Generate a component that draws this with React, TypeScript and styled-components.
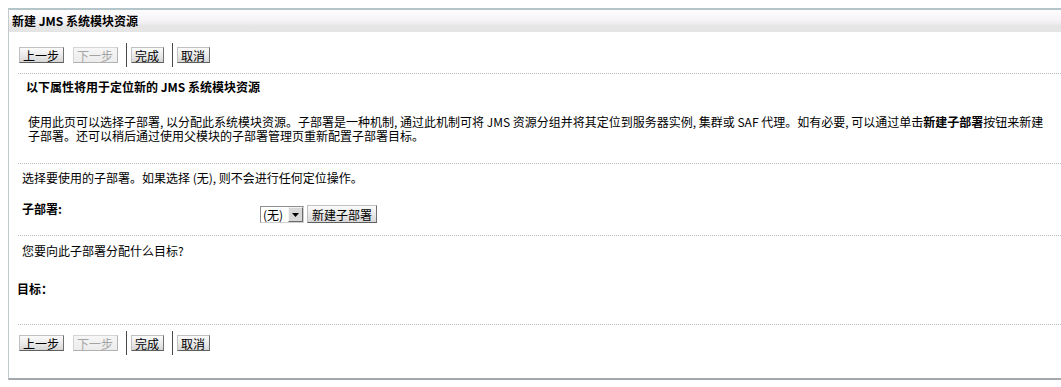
import React from "react";
import styled, { createGlobalStyle } from "styled-components";

const Global = createGlobalStyle`
  html, body { margin: 0; padding: 0; background: #fff; }
  body {
    font-family: "Noto Sans CJK SC", "DejaVu Sans", sans-serif;
    font-size: 12px;
    color: #000;
    overflow: hidden;
  }
`;

const Panel = styled.div`
  margin: 8px 0 0 8px;
  border-top: 2px solid #b4c5ca;
  border-left: 1px solid #c3cacd;
  border-bottom: 2px solid #a2a8ac;
  box-shadow: 0 1px 0 #d8dcdf;
  background: #fff;
`;

const Header = styled.div`
  height: 22px;
  display: flex;
  align-items: center;
  padding-left: 3px;
  background: linear-gradient(#fdfcfd 0%, #f6f4f7 45%, #efedf0 62%, #e6e6e6 70%, #e4e4e4 100%);
`;

const Title = styled.h1`
  margin: 0;
  font-size: 12px;
  font-weight: bold;
  line-height: 14px;
`;

const Body = styled.div`
  padding: 0 0 23px 9px;
`;

const Toolbar = styled.div<{ $top: number }>`
  display: flex;
  align-items: center;
  height: 24px;
  margin-top: ${(p) => p.$top}px;
  padding-left: 1px;
`;

const Button = styled.button<{ $gap?: number }>`
  font-family: inherit;
  font-size: 12px;
  line-height: 13px;
  height: 16px;
  padding: 0 4px 0 3px;
  margin: 0 ${(p) => p.$gap ?? 0}px 0 0;
  color: #000;
  border: 1px solid;
  border-color: #c0c0c0 #6f6f6f #5f5f5f #c0c0c0;
  background: linear-gradient(#fbfbfb, #e9e9e9 55%, #d6d6d6);
  cursor: pointer;
  &:disabled {
    color: #a4a4a4;
    border-color: #d4d4d4 #b4b4b4 #b0b0b0 #d4d4d4;
    background: linear-gradient(#f6f6f6, #ececec);
    cursor: default;
  }
`;

const Separator = styled.span<{ $gap: number }>`
  width: 1px;
  height: 24px;
  background: #4a4a4a;
  margin: 0 ${(p) => p.$gap}px 0 0;
`;

const Divider = styled.hr<{ $top: number }>`
  margin: ${(p) => p.$top}px 0 0 0;
  border: 0;
  border-top: 1px dotted #bdbdbd;
  height: 0;
`;

const Intro = styled.div`
  padding: 6px 0 20px 0;
`;

const Heading = styled.h2`
  margin: 0 0 0 8px;
  font-size: 12px;
  font-weight: bold;
  line-height: 14px;
`;

const Para = styled.p`
  margin: 21px 0 0 10px;
  font-size: 12px;
  line-height: 14px;
  white-space: nowrap;
`;

const Line = styled.div<{ $top: number; $left: number; $bold?: boolean }>`
  margin: ${(p) => p.$top}px 0 0 ${(p) => p.$left}px;
  line-height: 14px;
  font-weight: ${(p) => (p.$bold ? "bold" : "normal")};
`;

const FieldRow = styled.div`
  display: flex;
  align-items: flex-start;
  height: 19px;
  margin-top: 20px;
  padding-left: 4px;
`;

const FieldLabel = styled.label`
  width: 238px;
  flex: none;
  margin-top: -3px;
  font-weight: bold;
  line-height: 14px;
`;

const Select = styled.div`
  display: flex;
  align-items: stretch;
  justify-content: space-between;
  width: 44px;
  height: 17px;
  margin-top: 1px;
  box-sizing: border-box;
  border: 1px solid;
  border-color: #8e8e8e #d0d0d0 #d0d0d0 #8e8e8e;
  background: #fff;
  margin-right: 3px;
`;

const SelectValue = styled.span`
  padding: 0 0 0 2px;
  line-height: 15px;
  font-size: 12px;
`;

const Arrow = styled.span`
  width: 15px;
  display: flex;
  align-items: center;
  justify-content: center;
  box-sizing: border-box;
  border: 1px solid;
  border-color: #f4f4f4 #6a6a6a #6a6a6a #f4f4f4;
  background: #d8d8d8;
`;

const NewButton = styled(Button)`
  height: 18px;
  width: 70px;
  padding: 0;
`;

export default function App() {
  const nav = (
    <>
      <Button $gap={9}>上一步</Button>
      <Button $gap={8} disabled>下一步</Button>
      <Separator $gap={4} />
      <Button $gap={8}>完成</Button>
      <Separator $gap={4} />
      <Button>取消</Button>
    </>
  );
  return (
    <>
      <Global />
      <Panel>
        <Header>
          <Title>新建 JMS 系统模块资源</Title>
        </Header>
        <Body>
          <Toolbar $top={11}>{nav}</Toolbar>
          <Divider $top={6} />
          <Intro>
            <Heading>以下属性将用于定位新的 JMS 系统模块资源</Heading>
            <Para>
              使用此页可以选择子部署, 以分配此系统模块资源。子部署是一种机制, 通过此机制可将 JMS 资源分组并将其定位到服务器实例, 集群或 SAF 代理。如有必要, 可以通过单击<b>新建子部署</b>按钮来新建
              <br />
              子部署。还可以稍后通过使用父模块的子部署管理页重新配置子部署目标。
            </Para>
          </Intro>
          <Divider $top={0} />
          <Line $top={7} $left={4}>选择要使用的子部署。如果选择 (无), 则不会进行任何定位操作。</Line>
          <FieldRow>
            <FieldLabel>子部署:</FieldLabel>
            <Select>
              <SelectValue>(无)</SelectValue>
              <Arrow>
                <svg width="7" height="4" viewBox="0 0 7 4">
                  <path d="M0 0h7L3.5 4z" fill="#000" />
                </svg>
              </Arrow>
            </Select>
            <NewButton>新建子部署</NewButton>
          </FieldRow>
          <Divider $top={11} />
          <Line $top={8} $left={4}>您要向此子部署分配什么目标?</Line>
          <Line $top={24} $left={-1} $bold>目标：</Line>
          <Divider $top={28} />
          <Toolbar $top={6}>{nav}</Toolbar>
        </Body>
      </Panel>
    </>
  );
}
